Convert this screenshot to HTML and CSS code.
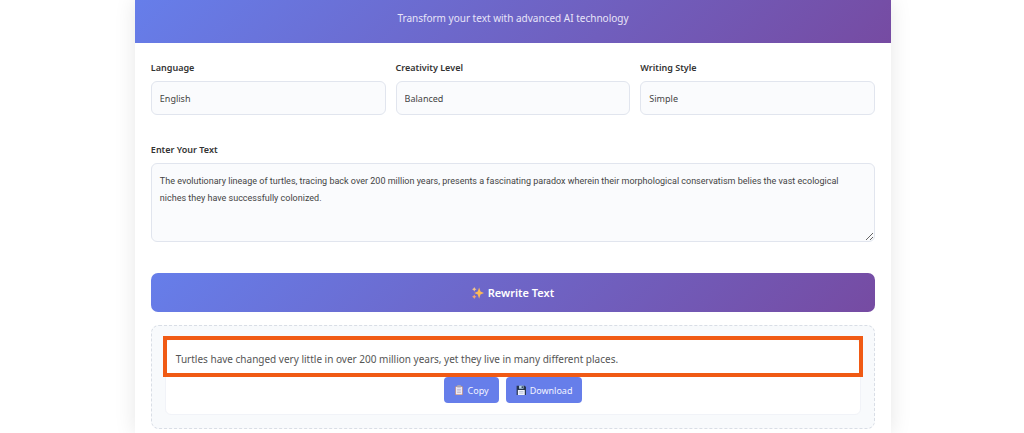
FILE: index.html
```html
<!DOCTYPE html>
<html lang="en">
<head>
    <meta charset="UTF-8">
    <meta name="viewport" content="width=device-width, initial-scale=1.0">
    <title>AI Text Rewriter</title>
    <link rel="stylesheet" href="styles.css">
</head>
<body>
    <div class="container">
        <header class="header">
            <p>Transform your text with advanced AI technology</p>
        </header>
        <form class="content" id="rewriteForm">
            <div class="controls">
                <div class="control-group">
                    <label for="language">Language</label>
                    <select id="language">
                        <option>English</option>
                        <option>Spanish</option>
                        <option>French</option>
                    </select>
                </div>
                <div class="control-group">
                    <label for="creativity">Creativity Level</label>
                    <select id="creativity">
                        <option>Balanced</option>
                        <option>Creative</option>
                    </select>
                </div>
                <div class="control-group">
                    <label for="style">Writing Style</label>
                    <select id="style">
                        <option>Simple</option>
                        <option>Formal</option>
                    </select>
                </div>
            </div>

            <div class="input-section">
                <label for="inputText">Enter Your Text</label>
                <textarea id="inputText">The evolutionary lineage of turtles, tracing back over 200 million years, presents a fascinating paradox wherein their morphological conservatism belies the vast ecological niches they have successfully colonized.</textarea>
            </div>

            <button type="submit" class="rewrite-btn">
                <svg class="icon" viewBox="0 0 16 16" aria-hidden="true">
                    <path fill="#fbb958" d="M9.5 0.5 11.3 6 16 8 11.3 10 9.5 15.5 7.700 10 3 8 7.700 6Z"/>
                    <path fill="#f9c98a" d="M3 0 4 2 6 3 4 4 3 6 2 4 0 3 2 2Z"/>
                    <path fill="#f9a66c" d="M3 10 4 12 6 13 4 14 3 16 2 14 0 13 2 12Z"/>
                </svg>
                Rewrite Text
            </button>

            <div class="output-section">
                <div class="output-box">
                    <div class="highlight"></div>
                    <p class="output-text">Turtles have changed very little in over 200 million years, yet they live in many different places.</p>
                    <div class="actions">
                        <button type="button" class="action-btn">
                            <svg class="icon" viewBox="0 0 16 16" aria-hidden="true">
                                <rect x="2" y="2" width="12" height="14" rx="1" fill="#c98d72"/>
                                <rect x="3" y="3" width="10" height="12" fill="#eee9f3"/>
                                <rect x="5" y="0" width="6" height="4" rx="1" fill="#a9a6b4"/>
                                <path d="M5 7h6M5 9.500h6M5 12h6" stroke="#aaa3c0" fill="none"/>
                            </svg>
                            Copy
                        </button>
                        <button type="button" class="action-btn">
                            <svg class="icon" viewBox="0 0 16 16" aria-hidden="true">
                                <path d="M1 1h13l2 2v13H1Z" fill="#26344f"/>
                                <rect x="5" y="1" width="7" height="5" fill="#b9d8ee"/>
                                <rect x="9" y="2" width="2" height="3" fill="#26344f"/>
                                <rect x="3" y="8" width="11" height="8" fill="#f1f3fa"/>
                                <path d="M5 10.500h7M5 13h7" stroke="#9fabc8" fill="none"/>
                            </svg>
                            Download
                        </button>
                    </div>
                </div>
            </div>
        </form>
    </div>

    <script>
        document.getElementById('rewriteForm').addEventListener('submit', function(event) {
            event.preventDefault();
        });
    </script>
</body>
</html>
```
FILE: styles.css
```css
* {
    margin: 0;
    padding: 0;
    box-sizing: border-box;
}
body {
    padding-left: 2px;
    font-family: "Noto Sans", "Open Sans", sans-serif;
    font-size: 10px;
    color: #333;
    background-color: #fff;
}
.container {
    width: 74%;
    min-height: 100vh;
    margin: 0 auto;
    background-color: white;
    box-shadow: 0 0 20px rgba(0, 0, 0, 0.1);
}
.header {
    padding: 10px 16px 17px;
    background: linear-gradient(135deg, #667eea 0%, #764ba2 100%);
    color: #e8e4f8;
    font-size: 10px;
    line-height: 16px;
    text-align: center;
}
.content {
    padding: 17px 16px 5px;
}
.controls {
    display: grid;
    grid-template-columns: repeat(3, 1fr);
    gap: 10px;
    margin-bottom: 27px;
}
label {
    display: block;
    margin-bottom: 5px;
    font-size: 9px;
    font-weight: 600;
    line-height: 16px;
}
select, textarea {
    display: block;
    width: 100%;
    border: 1px solid #e1e5ee;
    border-radius: 6px;
    background-color: #fafbfd;
    color: #444;
    font-family: inherit;
    font-size: 9px;
}
select {
    height: 34px;
    padding: 0 8px;
    appearance: none;
}
textarea {
    height: 79px;
    padding: 9px 8px;
    font-family: Roboto, sans-serif;
    line-height: 17px;
    resize: vertical;
}
.rewrite-btn {
    display: flex;
    align-items: center;
    justify-content: center;
    gap: 4px;
    width: 100%;
    height: 39px;
    margin: 31px 0 13px;
    border: none;
    border-radius: 7px;
    background: linear-gradient(135deg, #667eea 0%, #764ba2 100%);
    color: white;
    font-family: inherit;
    font-size: 11px;
    font-weight: 600;
    cursor: pointer;
}
.icon {
    width: 12px;
    height: 12px;
}
.output-section {
    padding: 13px;
    border: 1px dashed #d9dee6;
    border-radius: 8px;
    background-color: #f8fafc;
}
.output-box {
    position: relative;
    padding: 10px 10px 11px;
    border: 1px solid #f1f3f8;
    border-radius: 6px;
    background-color: white;
}
.highlight {
    position: absolute;
    top: -4px;
    left: -3px;
    right: -3px;
    height: 41px;
    border: 4px solid #f05a14;
}
.output-text {
    margin-bottom: 9px;
    color: #555;
    font-size: 10px;
    line-height: 18px;
}
.actions {
    display: flex;
    justify-content: center;
    gap: 7px;
}
.action-btn {
    display: flex;
    align-items: center;
    gap: 4px;
    height: 26px;
    padding: 0 10px;
    border: none;
    border-radius: 4px;
    background-color: #667eea;
    color: #f3f4ff;
    font-family: inherit;
    font-size: 9px;
    cursor: pointer;
}
.action-btn .icon {
    width: 10px;
    height: 10px;
}
```
